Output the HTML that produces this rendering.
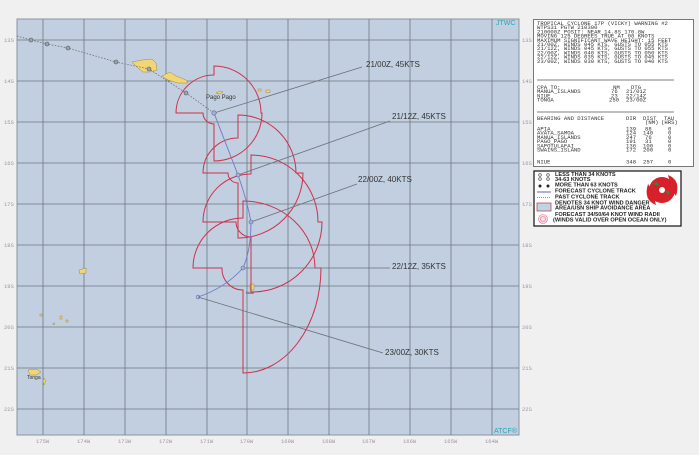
<!DOCTYPE html>
<html><head><meta charset="utf-8"><style>
html,body{margin:0;padding:0;background:#f0f0f0;}
svg{display:block}
.m{font-family:"Liberation Mono",monospace;font-size:5.6px;fill:#333}
.ax{font-family:"Liberation Mono",monospace;font-size:5.5px;fill:#999}
.lb{font-family:"Liberation Sans",sans-serif;font-size:8px;fill:#333}
.lg{font-family:"Liberation Sans",sans-serif;font-size:5.6px;font-weight:bold;fill:#222}
</style></head><body>
<svg width="699" height="455" viewBox="0 0 699 455" xmlns="http://www.w3.org/2000/svg">
<rect width="699" height="455" fill="#f0f0f0"/>
<rect x="17" y="19" width="502" height="416" fill="#c1cfe0" stroke="#8a949e" stroke-width="1"/>
<g stroke="#6e7780" stroke-width="0.8">
<line x1="43" y1="19" x2="43" y2="435"/><line x1="84" y1="19" x2="84" y2="435"/><line x1="125" y1="19" x2="125" y2="435"/><line x1="166" y1="19" x2="166" y2="435"/><line x1="207" y1="19" x2="207" y2="435"/><line x1="247" y1="19" x2="247" y2="435"/><line x1="288" y1="19" x2="288" y2="435"/><line x1="329" y1="19" x2="329" y2="435"/><line x1="369" y1="19" x2="369" y2="435"/><line x1="410" y1="19" x2="410" y2="435"/><line x1="451" y1="19" x2="451" y2="435"/><line x1="492" y1="19" x2="492" y2="435"/>
<line x1="17" y1="40" x2="519" y2="40"/><line x1="17" y1="81" x2="519" y2="81"/><line x1="17" y1="122" x2="519" y2="122"/><line x1="17" y1="163" x2="519" y2="163"/><line x1="17" y1="204" x2="519" y2="204"/><line x1="17" y1="245" x2="519" y2="245"/><line x1="17" y1="286" x2="519" y2="286"/><line x1="17" y1="327" x2="519" y2="327"/><line x1="17" y1="368" x2="519" y2="368"/><line x1="17" y1="409" x2="519" y2="409"/>
</g>
<g class="ax">
<text x="4" y="42">13S</text><text x="4" y="83">14S</text><text x="4" y="124">15S</text><text x="4" y="165">16S</text><text x="4" y="206">17S</text><text x="4" y="247">18S</text><text x="4" y="288">19S</text><text x="4" y="329">20S</text><text x="4" y="370">21S</text><text x="4" y="411">22S</text>
<text x="522" y="42">13S</text><text x="522" y="83">14S</text><text x="522" y="124">15S</text><text x="522" y="165">16S</text><text x="522" y="206">17S</text><text x="522" y="247">18S</text><text x="522" y="288">19S</text><text x="522" y="329">20S</text><text x="522" y="370">21S</text><text x="522" y="411">22S</text>
<text x="36" y="443">175W</text><text x="77" y="443">174W</text><text x="118" y="443">173W</text><text x="159" y="443">172W</text><text x="200" y="443">171W</text><text x="240" y="443">170W</text><text x="281" y="443">169W</text><text x="322" y="443">168W</text><text x="362" y="443">167W</text><text x="403" y="443">166W</text><text x="444" y="443">165W</text><text x="485" y="443">164W</text>
</g>
<!-- islands -->
<g fill="#f2d676" stroke="#a08a40" stroke-width="0.5">
<path d="M132,62 L142,60 L152,59 L156,63 L157,70 L150,72 L143,72 L138,68 Z"/>
<path d="M162,76 L170,72 L176,76 L186,80 L188,83 L178,83 L168,80 Z"/>
<path d="M216,93 L220,91 L223,92 L220,94 Z"/>
<rect x="258" y="89" width="3" height="2"/><rect x="266" y="90" width="4" height="2.5"/>
<path d="M250,284 L254,284 L254,290 L250,290 Z"/>
<path d="M28,370 L36,369 L41,372 L36,375 L30,375 Z"/><path d="M44,378 L46,381 L44,385 L43,381 Z"/>
<path d="M79,270 L86,268 L86,273 L80,274 Z"/>
<rect x="60" y="316" width="2" height="3"/><rect x="66" y="320" width="2" height="2"/><rect x="40" y="314" width="2" height="2"/><rect x="53" y="323" width="1.5" height="1.5"/>
</g>
<g class="lb" style="font-size:6px;fill:#333"><text x="206" y="99">Pago Pago</text><text x="246" y="294" style="font-size:4px">Niue</text><text x="27" y="379" style="font-size:5px">Tonga</text></g>
<!-- wind radii -->
<g fill="none" stroke="#d0304a" stroke-width="1">
<path d="M214,66 A47,47 0 0 1 261,113 L262,113 A48,48 0 0 1 214,161 L214,124 A11,11 0 0 1 203,113 L176,113 A38,38 0 0 1 214,75 Z"/>
<path d="M238,115 A58,58 0 0 1 296,173 L303,173 A65,65 0 0 1 238,238 L238,183 A10,10 0 0 1 228,173 L203,173 A35,35 0 0 1 238,138 Z"/>
<path d="M251,155 A67,67 0 0 1 318,222 L322,222 A70,70 0 0 1 251,292 L251,237 A15,15 0 0 1 236,222 L203,222 A48,48 0 0 1 251,174 Z"/>
<path d="M243,201 A72,67 0 0 1 315,268 L321,268 A78,105 0 0 1 243,373 L243,290 A21,21 0 0 1 222,268 L193,268 A50,50 0 0 1 243,218 Z"/>
</g>
<!-- label lines -->
<g stroke="#6a7078" stroke-width="0.8">
<line x1="214" y1="113" x2="362" y2="67"/><line x1="238" y1="175" x2="390" y2="121"/><line x1="251" y1="222" x2="357" y2="184"/><line x1="243" y1="268" x2="390" y2="268"/><line x1="198" y1="297" x2="383" y2="353"/>
</g>
<!-- past track -->
<polyline points="17,36 31,40 47,44 68,48 116,62 149,69 186,93 214,113" fill="none" stroke="#6a7078" stroke-width="0.8" stroke-dasharray="1.5,1.5"/>
<g fill="#9aa4ae" stroke="#555" stroke-width="0.6">
<circle cx="31" cy="40" r="2"/><circle cx="47" cy="44" r="2"/><circle cx="68" cy="48" r="2"/><circle cx="116" cy="62" r="2"/><circle cx="149" cy="69" r="2"/><circle cx="186" cy="93" r="2"/>
</g>
<!-- forecast track -->
<path d="M214,113 L238,175 Q247,200 251,222 Q251,250 243,268 Q225,288 198,297" fill="none" stroke="#6f78c8" stroke-width="0.9"/>
<g fill="#aab2c8" stroke="#5a63a8" stroke-width="0.6">
<circle cx="214" cy="113" r="2.2"/><circle cx="238" cy="175" r="2"/><circle cx="251" cy="222" r="2"/><circle cx="243" cy="268" r="2"/><circle cx="198" cy="297" r="1.8" fill="none"/>
</g>
<g class="lb"><text x="366" y="67">21/00Z, 45KTS</text><text x="392" y="119">21/12Z, 45KTS</text><text x="358" y="182">22/00Z, 40KTS</text><text x="392" y="269">22/12Z, 35KTS</text><text x="385" y="355">23/00Z, 30KTS</text></g>
<text x="496" y="25" style="font-family:'Liberation Sans',sans-serif;font-size:7px;fill:#2aa6b6">JTWC</text>
<text x="494" y="433" style="font-family:'Liberation Sans',sans-serif;font-size:7px;fill:#2aa6b6">ATCF®</text>
<!-- info box -->
<rect x="533.5" y="19.5" width="160" height="147" fill="#fff" stroke="#777" stroke-width="1"/>
<g class="m">
<text x="537" y="25">TROPICAL CYCLONE 17P (VICKY) WARNING #2</text>
<text x="537" y="29.2">WTPS31 PGTW 210300</text>
<text x="537" y="33.4">210000Z POSIT: NEAR 14.8S 170.8W</text>
<text x="537" y="37.6">MOVING 125 DEGREES TRUE AT 08 KNOTS</text>
<text x="537" y="41.8">MAXIMUM SIGNIFICANT WAVE HEIGHT: 15 FEET</text>
<text x="537" y="46">21/00Z, WINDS 045 KTS, GUSTS TO 055 KTS</text>
<text x="537" y="50.2">21/12Z, WINDS 045 KTS, GUSTS TO 055 KTS</text>
<text x="537" y="54.4">22/00Z, WINDS 040 KTS, GUSTS TO 050 KTS</text>
<text x="537" y="58.6">22/12Z, WINDS 035 KTS, GUSTS TO 045 KTS</text>
<text x="537" y="62.8">23/00Z, WINDS 030 KTS, GUSTS TO 040 KTS</text>
<text x="537" y="89">CPA TO:</text><text x="613" y="89">NM</text><text x="631" y="89">DTG</text>
<text x="537" y="93.2">MANUA_ISLANDS</text><text x="611" y="93.2">76</text><text x="626" y="93.2">21/01Z</text>
<text x="537" y="97.4">NIUE</text><text x="611" y="97.4">23</text><text x="626" y="97.4">22/14Z</text>
<text x="537" y="101.6">TONGA</text><text x="609" y="101.6">250</text><text x="626" y="101.6">23/00Z</text>
<text x="537" y="120">BEARING AND DISTANCE</text><text x="626" y="120">DIR</text><text x="643" y="120">DIST</text><text x="664" y="120">TAU</text>
<text x="645" y="124.2">(NM)</text><text x="661" y="124.2">(HRS)</text>
<text x="537" y="130.5">APIA</text><text x="626" y="130.5">139</text><text x="645" y="130.5">88</text><text x="668" y="130.5">0</text>
<text x="537" y="134.7">AVATA_SAMOA</text><text x="626" y="134.7">124</text><text x="643" y="134.7">140</text><text x="668" y="134.7">0</text>
<text x="537" y="138.9">MANUA_ISLANDS</text><text x="626" y="138.9">247</text><text x="645" y="138.9">76</text><text x="668" y="138.9">0</text>
<text x="537" y="143.1">PAGO_PAGO</text><text x="626" y="143.1">191</text><text x="645" y="143.1">31</text><text x="668" y="143.1">0</text>
<text x="537" y="147.3">SAPOTULAFAI</text><text x="626" y="147.3">136</text><text x="643" y="147.3">100</text><text x="668" y="147.3">0</text>
<text x="537" y="151.5">SWAINS_ISLAND</text><text x="626" y="151.5">172</text><text x="643" y="151.5">200</text><text x="668" y="151.5">0</text>
<text x="537" y="163.5">NIUE</text><text x="626" y="163.5">348</text><text x="643" y="163.5">257</text><text x="668" y="163.5">0</text>
</g>
<line x1="537" y1="80" x2="674" y2="80" stroke="#555" stroke-width="0.7"/>
<line x1="537" y1="112" x2="674" y2="112" stroke="#555" stroke-width="0.7"/>
<!-- legend -->
<rect x="534" y="171" width="147" height="55" fill="#fff" stroke="#111" stroke-width="1.2"/>
<g fill="none" stroke="#333" stroke-width="0.6">
<circle cx="540" cy="175" r="1.3"/><circle cx="540" cy="179" r="1.3"/><circle cx="548" cy="175" r="1.3"/><circle cx="548" cy="179" r="1.3"/>
</g>
<g fill="#222"><circle cx="540" cy="186" r="1.5"/><circle cx="548" cy="186" r="1.5"/></g>
<line x1="537" y1="192" x2="551" y2="192" stroke="#5a63c0" stroke-width="1"/>
<line x1="537" y1="197.5" x2="551" y2="197.5" stroke="#777" stroke-width="0.8" stroke-dasharray="1,1"/>
<rect x="537" y="203" width="14" height="8" fill="#b8d8e8" stroke="#d04050" stroke-width="0.8"/>
<circle cx="543" cy="219" r="4.5" fill="#fbe0e8" stroke="#e07090" stroke-width="0.6"/><circle cx="543" cy="219" r="2.5" fill="none" stroke="#e07090" stroke-width="0.6"/>
<g class="lg">
<text x="555" y="176">LESS THAN 34 KNOTS</text>
<text x="555" y="181">34-63 KNOTS</text>
<text x="555" y="186.5">MORE THAN 63 KNOTS</text>
<text x="555" y="192.5">FORECAST CYCLONE TRACK</text>
<text x="555" y="198.5">PAST CYCLONE TRACK</text>
<text x="555" y="204.5">DENOTES 34 KNOT WIND DANGER</text>
<text x="555" y="209.5">AREA/USN SHIP AVOIDANCE AREA</text>
<text x="555" y="216">FORECAST 34/50/64 KNOT WIND RADII</text>
<text x="553" y="221.5">(WINDS VALID OVER OPEN OCEAN ONLY)</text>
</g>
<circle cx="662" cy="190" r="13" fill="#d8202a"/>
<path d="M668,175 Q681,180 676,196 L672,190 Z" fill="#d8202a"/>
<path d="M656,205 Q643,200 648,184 L652,190 Z" fill="#d8202a"/>
<circle cx="662" cy="190" r="3" fill="#fff"/>
<path d="M652,184 L657,182 L660,186 Z M665,190 L670,192 L668,195 Z" fill="#2a8a3a"/>
</svg>
</body></html>
